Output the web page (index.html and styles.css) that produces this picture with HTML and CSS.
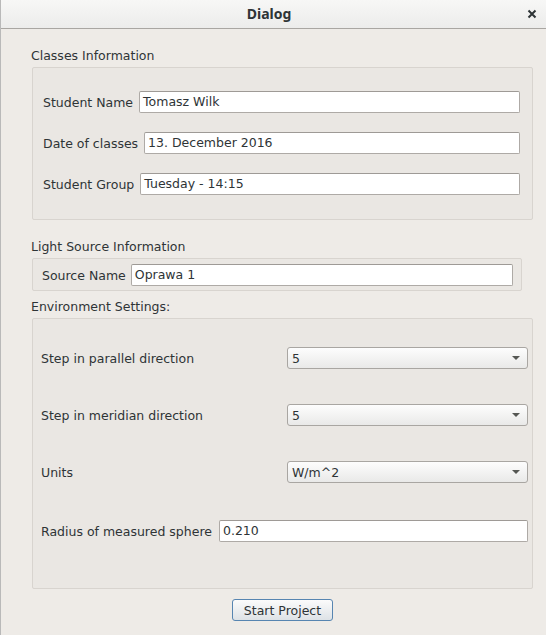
FILE: index.html
```html
<!DOCTYPE html>
<html>
<head>
<meta charset="utf-8">
<title>Dialog</title>
<link rel="stylesheet" href="styles.css">
</head>
<body>
<div class="window">
  <div class="titlebar">
    <span class="spacer"></span>
    <span class="title">Dialog</span>
    <span class="close">
      <svg width="10" height="10" viewBox="0 0 10 10"><path d="M1.5 1.5 L8.5 8.5 M8.5 1.5 L1.5 8.5" stroke="#2e3436" stroke-width="2" stroke-linecap="butt"/></svg>
    </span>
  </div>
  <div class="content">
    <div class="section-label">Classes Information</div>
    <div class="group g-classes">
      <div class="row"><span class="lbl">Student Name</span><div class="input">Tomasz Wilk</div></div>
      <div class="row"><span class="lbl">Date of classes</span><div class="input">13. December 2016</div></div>
      <div class="row"><span class="lbl">Student Group</span><div class="input">Tuesday - 14:15</div></div>
    </div>

    <div class="section-label">Light Source Information</div>
    <div class="group g-light">
      <div class="row"><span class="lbl">Source Name</span><div class="input">Oprawa 1</div></div>
    </div>

    <div class="section-label">Environment Settings:</div>
    <div class="group g-env">
      <div class="row combo-row"><span class="lbl wide">Step in parallel direction</span><div class="combo"><span>5</span><span class="arrow"></span></div></div>
      <div class="row combo-row"><span class="lbl wide">Step in meridian direction</span><div class="combo"><span>5</span><span class="arrow"></span></div></div>
      <div class="row combo-row"><span class="lbl wide">Units</span><div class="combo"><span>W/m^2</span><span class="arrow"></span></div></div>
      <div class="row radius-row"><span class="lbl">Radius of measured sphere</span><div class="input">0.210</div></div>
    </div>

    <div class="actions">
      <button class="btn">Start Project</button>
    </div>
  </div>
</div>
</body>
</html>
```

FILE: styles.css
```css
* { box-sizing: border-box; }

html, body {
  margin: 0;
  padding: 0;
  height: 100%;
}

body {
  background: #b9b9b9;
  font-family: "DejaVu Sans", sans-serif;
  font-size: 12.5px;
  color: #2e3436;
}

.window {
  margin-left: 1px;
  height: 635px;
  background: #eeebe7;
  display: flex;
  flex-direction: column;
}

.titlebar {
  height: 29px;
  flex: none;
  background: linear-gradient(#f7f7f6, #ececeb);
  border-bottom: 1px solid #a9a6a2;
  display: grid;
  grid-template-columns: 1fr auto 1fr;
  align-items: center;
  padding: 0 9px 1px 0;
}

.title {
  font-family: "Noto Sans", sans-serif;
  font-weight: bold;
  font-size: 14px;
  color: #2e3436;
}

.close {
  justify-self: end;
  display: flex;
  align-items: center;
}

.content {
  padding: 19px 13px 0 31px;
  display: flex;
  flex-direction: column;
}

.section-label {
  line-height: 16px;
  height: 16px;
  margin-bottom: 3px;
  margin-left: -1px;
}

.group {
  background: #eae7e3;
  border: 1px solid #d8d4cf;
  border-radius: 2px;
  display: flex;
  flex-direction: column;
}

.row {
  display: flex;
  align-items: center;
  height: 22px;
}

.lbl {
  white-space: nowrap;
  margin-right: 6px;
}

.input {
  flex: 1;
  height: 22px;
  line-height: 20px;
  background: #ffffff;
  border: 1px solid #aeaaa6;
  border-top-color: #9e9a96;
  border-radius: 2px;
  padding: 0 3px;
  white-space: nowrap;
}

.g-classes {
  padding: 23px 12px 24px 10px;
  gap: 19px;
  margin-bottom: 19px;
}

.g-light {
  width: 490px;
  padding: 5px 8px 4px 9px;
  margin-bottom: 8px;
}

.g-light .lbl { margin-right: 5px; }

.g-env {
  padding: 28px 4px 46px 8px;
  gap: 35px;
}

.lbl.wide {
  flex: 1;
}

.combo {
  width: 241px;
  height: 22px;
  background: linear-gradient(#fdfdfd, #e9e9e8);
  border: 1px solid #a9a6a2;
  border-radius: 3px;
  display: flex;
  align-items: center;
  justify-content: space-between;
  padding: 0 7px 0 4px;
}

.arrow {
  width: 0;
  height: 0;
  border-left: 4px solid transparent;
  border-right: 4px solid transparent;
  border-top: 4px solid #555753;
}

.radius-row {
  margin-top: 2px;
}

.radius-row .lbl { margin-right: 7px; }

.actions {
  display: flex;
  justify-content: center;
  padding-top: 10px;
}

.btn {
  width: 101px;
  height: 22px;
  font-family: "DejaVu Sans", sans-serif;
  font-size: 12.5px;
  color: #2e3436;
  background: linear-gradient(#fbfbfb, #dde2e6);
  border: 1px solid #5785b1;
  border-radius: 3px;
  padding: 0;
}
```
